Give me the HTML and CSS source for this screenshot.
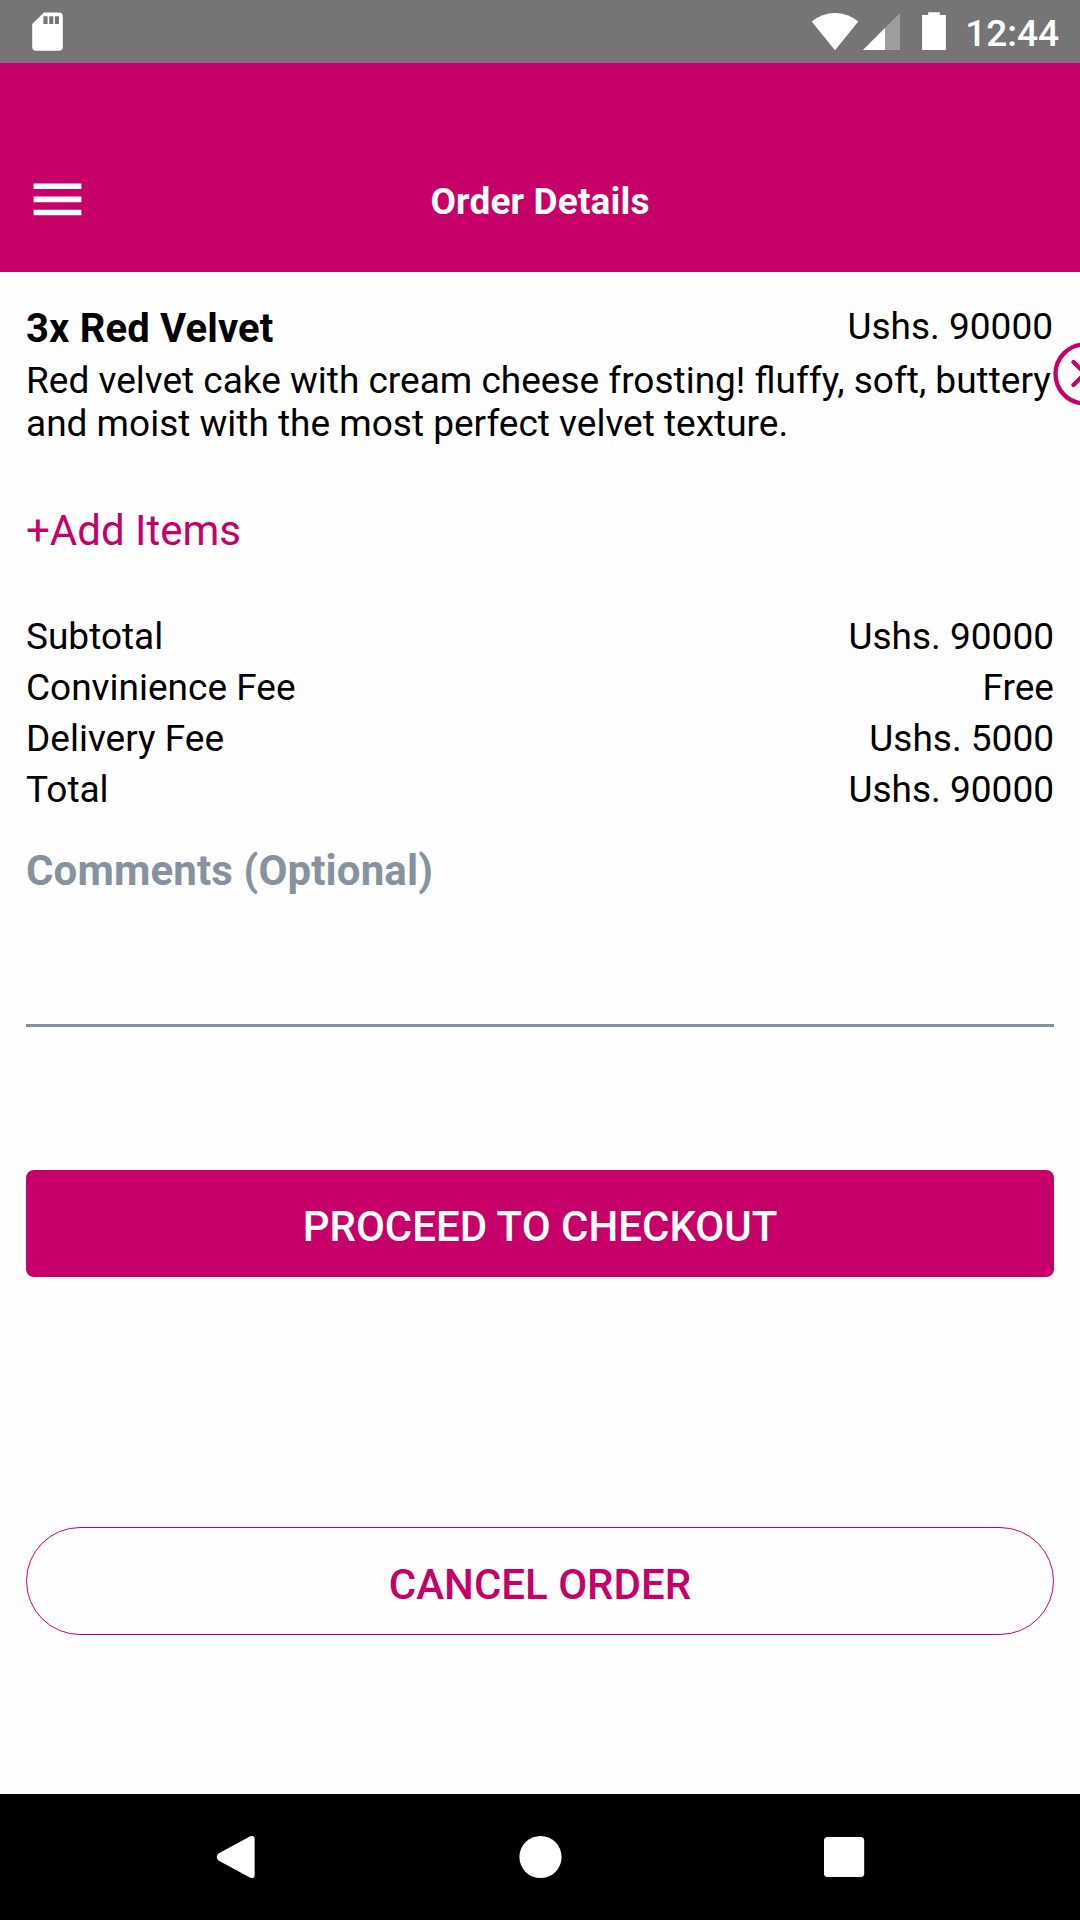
FILE: index.html
```html
<!DOCTYPE html>
<html lang="en">
<head>
<meta charset="utf-8">
<title>Order Details</title>
<link rel="stylesheet" href="styles.css">
</head>
<body>
<div class="screen">
  <div class="status-bar">
    <svg class="sd-icon" width="32" height="40" viewBox="0 0 32 40"><path fill="#fff" fill-rule="evenodd" d="M12 .4H27Q30.8.4 30.8 4.2V35Q30.8 38.7 27 38.7H4Q.2 38.7.2 35V12ZM11.4 4.2V12H15.6V4.2ZM17.2 4.2V12H21.3V4.2ZM22.9 4.2V12H27V4.2Z"/></svg>
    <div class="status-icons">
      <svg width="48" height="40" viewBox="0 0 48 40"><path fill="#fff" d="M24 38.3L.7 9.6Q11 1 24 1T47.3 9.6Z"/></svg>
      <svg class="signal-icon" width="38" height="40" viewBox="0 0 38 40"><path fill="#fff" fill-opacity=".3" d="M37 1V38H0Z"/><path fill="#fff" d="M22 16V38H0Z"/></svg>
      <svg class="battery-icon" width="24" height="40" viewBox="0 0 24 40"><path fill="#fff" d="M6.2 .2H17.8V3H23.9V38H.1V3H6.2Z"/></svg>
      <span class="clock">12:44</span>
    </div>
  </div>

  <header class="app-bar">
    <svg class="menu-icon" width="50" height="34" viewBox="0 0 50 34"><path fill="#fff" d="M1.6 1.5H49.4V7H1.6ZM1.6 14.5H49.4V20.2H1.6ZM1.6 27.7H49.4V33.3H1.6Z"/></svg>
    <h1 class="app-title">Order Details</h1>
  </header>

  <main class="content">
    <section class="item">
      <div class="item-head">
        <h2 class="item-name">3x Red Velvet</h2>
        <span class="item-price">Ushs. 90000</span>
      </div>
      <p class="item-desc">Red velvet cake with cream cheese frosting! fluffy, soft, buttery and moist with the most perfect velvet texture.</p>
      <svg class="remove-icon" width="64" height="64" viewBox="0 0 64 64" fill="none" stroke="#c60068" stroke-width="4.3" stroke-linecap="round"><circle cx="32" cy="32" r="29.5"/><path d="M20.5 20L43.5 43M43.5 20L20.5 43"/></svg>
    </section>

    <a class="add-items">+Add Items</a>

    <dl class="summary">
      <div class="summary-row"><dt>Subtotal</dt><dd>Ushs. 90000</dd></div>
      <div class="summary-row"><dt>Convinience Fee</dt><dd>Free</dd></div>
      <div class="summary-row"><dt>Delivery Fee</dt><dd>Ushs. 5000</dd></div>
      <div class="summary-row"><dt>Total</dt><dd>Ushs. 90000</dd></div>
    </dl>

    <div class="comments">Comments (Optional)</div>

    <button class="button checkout">PROCEED TO CHECKOUT</button>
    <button class="button cancel">CANCEL ORDER</button>
  </main>

  <nav class="nav-bar">
    <svg width="44" height="44" viewBox="0 0 44 44"><path fill="#fff" d="M3 18.8L35.3 1.3Q39.6-.2 39.6 4V40Q39.6 44.2 35.3 42.7L3 25.2Q.6 22 3 18.8Z"/></svg>
    <svg width="44" height="44" viewBox="0 0 44 44"><circle cx="21.5" cy="22" r="21.1" fill="#fff"/></svg>
    <svg width="44" height="44" viewBox="0 0 44 44"><rect x="2" y="2" width="40.2" height="40" rx="3.5" fill="#fff"/></svg>
  </nav>
</div>
</body>
</html>
```
FILE: styles.css
```css
* {
  box-sizing: border-box;
}

body,
h1,
h2,
p,
dl,
dd {
  margin: 0;
}

body {
  font-family: Roboto, "Liberation Sans", sans-serif;
  font-size: 37px;
  color: #000;
}

svg {
  display: block;
  flex: none;
}

.screen {
  display: flex;
  flex-direction: column;
  width: 1080px;
  height: 1920px;
  background: #fefefe;
  overflow: hidden;
}

.status-bar {
  display: flex;
  justify-content: space-between;
  height: 63px;
  padding: 12px 21px 0 32px;
  background: #757575;
}

.status-icons {
  display: flex;
  align-items: flex-start;
}

.signal-icon {
  margin-left: 4px;
}

.battery-icon {
  margin-left: 21px;
}

.clock {
  margin-left: 19px;
  line-height: 43px;
  font-weight: 500;
  color: #fff;
}

.app-bar {
  display: grid;
  grid-template-columns: 1fr auto 1fr;
  align-items: start;
  height: 209px;
  padding: 117px 32px 0;
  background: #c60068;
}

.menu-icon {
  margin-top: 2px;
}

.app-title {
  font-size: 37px;
  line-height: 43px;
  letter-spacing: 0.15px;
  color: #fff;
}

.content {
  display: flex;
  flex-direction: column;
  flex: 1;
  padding: 34px 26px 0;
}

.item {
  position: relative;
}

.item-head {
  display: flex;
  justify-content: space-between;
  align-items: flex-start;
}

.item-name {
  font-size: 40px;
  line-height: 45px;
  letter-spacing: 0.15px;
}

.item-price {
  padding-right: 1px;
  line-height: 41px;
}

.item-desc {
  margin-top: 8px;
  line-height: 43px;
}

/* Hangs past the right edge of the item and is clipped by the screen. */
.remove-icon {
  position: absolute;
  top: 36px;
  right: -63px;
}

.add-items {
  margin-top: 61px;
  font-size: 42px;
  line-height: 50px;
  color: #c60068;
}

.summary {
  margin-top: 55px;
}

.summary-row {
  display: flex;
  justify-content: space-between;
  line-height: 51px;
}

.comments {
  height: 181px;
  margin-top: 31px;
  border-bottom: 3px solid #86939e;
  font-size: 42px;
  font-weight: 700;
  line-height: 50px;
  letter-spacing: 0.13px;
  color: #86939e;
}

.button {
  padding: 7px 0 0;
  border: 0;
  font-family: inherit;
  font-size: 42px;
  font-weight: 500;
  line-height: 50px;
}

.checkout {
  height: 107px;
  margin-top: 143px;
  border-radius: 8px;
  background: #c60068;
  color: #fff;
}

.cancel {
  height: 108px;
  margin-top: 250px;
  border: 1px solid #c60068;
  border-radius: 54px;
  background: #fefefe;
  color: #c60068;
}

.nav-bar {
  display: flex;
  justify-content: space-between;
  align-items: center;
  height: 126px;
  padding: 0 214px 0 215px;
  background: #000;
}
```
